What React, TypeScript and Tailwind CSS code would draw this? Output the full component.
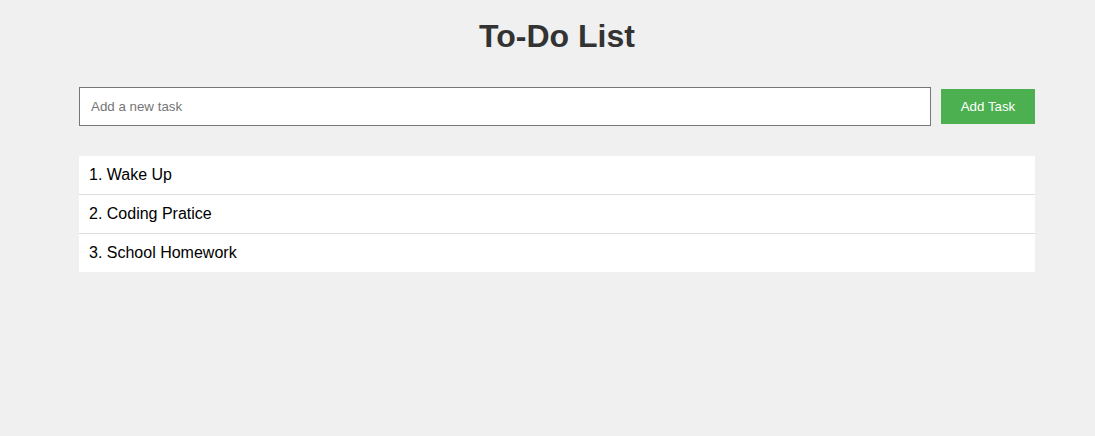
import { useState } from 'react'

export default function App() {
  const [tareas, setTareas] = useState<string[]>(['Wake Up', 'Coding Pratice', 'School Homework'])
  const [nueva, setNueva] = useState('')

  const agregar = () => {
    if (!nueva.trim()) return
    setTareas([...tareas, nueva.trim()])
    setNueva('')
  }

  return (
    <div className="min-h-[436px] bg-[#f0f0f0] font-['Liberation_Sans',Arial,sans-serif]">
      <div className="ml-[79px] w-[956px] pt-[18px]">
        <h1 className="text-center text-[32px] leading-[37px] font-bold text-[#333]">To-Do List</h1>

        <div className="mt-[32px] flex items-center gap-[10px]">
          <input
            type="text"
            placeholder="Add a new task"
            value={nueva}
            onChange={(e) => setNueva(e.target.value)}
            className="h-[39px] flex-1 border border-[#767676] bg-white px-[11px] text-[13.33px] text-black placeholder:text-[#757575] focus:outline-none"
          />
          <button
            onClick={agregar}
            className="h-[35px] w-[94px] bg-[#4caf50] text-[13.33px] text-white"
          >
            Add Task
          </button>
        </div>

        <ul className="mt-[30px]">
          {tareas.map((t, i) => (
            <li
              key={i}
              className="border-b border-[#ddd] bg-white px-[10px] py-[10px] text-[16px] leading-[18px] text-black last:border-b-0"
            >
              {i + 1}. {t}
            </li>
          ))}
        </ul>
      </div>
    </div>
  )
}
